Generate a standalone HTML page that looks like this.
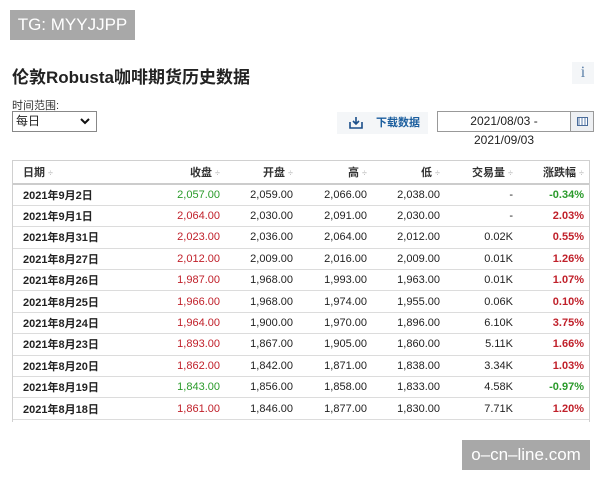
<!DOCTYPE html>
<html><head><meta charset="utf-8"><style>
*{margin:0;padding:0;box-sizing:border-box}
body{width:600px;height:480px;background:#fff;font-family:"Liberation Sans","Noto Sans CJK SC",sans-serif;position:relative;overflow:hidden;color:#222}
.a{position:absolute}
.wm{background:#a8a8a8;color:#fff;font-size:17px;line-height:30px;text-align:center}
table{border-collapse:collapse;font-size:11px;width:577px}
td,th{height:21.4px;padding:0;text-align:right;border-bottom:1px solid #dcdcdc;white-space:nowrap}
th{font-weight:bold;color:#333;height:23px;border-bottom:2px solid #ccc}
th span{color:#aaa;font-weight:normal;font-size:9px;margin-left:3px}
td:first-child,th:first-child{text-align:left;padding-left:10px;font-weight:bold}
td:last-child,th:last-child{padding-right:6px;font-weight:bold}
.g{color:#2a9a2a}.r{color:#c0202a}
</style></head><body>
<div class="a wm" style="left:10px;top:10px;width:125px;height:30px">TG: MYYJJPP</div>
<div class="a" style="left:12px;top:63px;font-size:17px;font-weight:bold;color:#222">伦敦Robusta咖啡期货历史数据</div>
<div class="a" style="left:572px;top:62px;width:22px;height:22px;background:#f4f6f8;color:#5a7fa8;font-family:'Liberation Serif',serif;font-size:16px;text-align:center;line-height:22px">i</div>
<div class="a" style="left:12px;top:97px;font-size:11px;color:#333">时间范围:</div>
<div class="a" style="left:12px;top:111px;width:85px;height:21px;border:1px solid #888;font-size:12px;line-height:19px;padding-left:3px">每日<svg style="position:absolute;right:6px;top:6px" width="10" height="7" viewBox="0 0 10 7"><path d="M1 1l4 4 4-4" fill="none" stroke="#111" stroke-width="2"/></svg></div>
<div class="a" style="left:337px;top:112px;width:91px;height:22px;background:#f4f6f8;font-size:11px;line-height:22px;color:#1b5e9e;font-weight:bold">
<svg style="position:absolute;left:12px;top:4px" width="14" height="13" viewBox="0 0 14 13"><path d="M1 6v6h12V6M7 1v7M4 5l3 3 3-3" fill="none" stroke="#1b4f8a" stroke-width="1.6"/></svg>
<span style="position:absolute;left:39px">下载数据</span></div>
<div class="a" style="left:437px;top:111px;width:134px;height:21px;border:1px solid #999;font-size:12px;text-align:center;line-height:19px">2021/08/03 -</div>
<div class="a" style="left:570px;top:111px;width:24px;height:21px;border:1px solid #999;background:#eef0f3"><div style="margin:5px 6px;width:11px;height:9px;border:1px solid #4a6c9a;background:repeating-linear-gradient(90deg,#aebfd6 0 2px,#fff 2px 3px)"></div></div>
<div class="a" style="left:437px;top:133px;width:134px;font-size:12px;text-align:center">2021/09/03</div>
<div class="a" style="left:12px;top:160px;width:578px;height:262px;border:1px solid #d0d0d0;border-bottom:none;overflow:hidden">
<table>
<tr><th>日期<span>÷</span></th><th style="width:75px">收盘<span>÷</span></th><th style="width:73px">开盘<span>÷</span></th><th style="width:74px">高<span>÷</span></th><th style="width:73px">低<span>÷</span></th><th style="width:73px">交易量<span>÷</span></th><th style="width:77px">涨跌幅<span>÷</span></th></tr>
<tr><td>2021年9月2日</td><td class="g">2,057.00</td><td>2,059.00</td><td>2,066.00</td><td>2,038.00</td><td>-</td><td class="g">-0.34%</td></tr>
<tr><td>2021年9月1日</td><td class="r">2,064.00</td><td>2,030.00</td><td>2,091.00</td><td>2,030.00</td><td>-</td><td class="r">2.03%</td></tr>
<tr><td>2021年8月31日</td><td class="r">2,023.00</td><td>2,036.00</td><td>2,064.00</td><td>2,012.00</td><td>0.02K</td><td class="r">0.55%</td></tr>
<tr><td>2021年8月27日</td><td class="r">2,012.00</td><td>2,009.00</td><td>2,016.00</td><td>2,009.00</td><td>0.01K</td><td class="r">1.26%</td></tr>
<tr><td>2021年8月26日</td><td class="r">1,987.00</td><td>1,968.00</td><td>1,993.00</td><td>1,963.00</td><td>0.01K</td><td class="r">1.07%</td></tr>
<tr><td>2021年8月25日</td><td class="r">1,966.00</td><td>1,968.00</td><td>1,974.00</td><td>1,955.00</td><td>0.06K</td><td class="r">0.10%</td></tr>
<tr><td>2021年8月24日</td><td class="r">1,964.00</td><td>1,900.00</td><td>1,970.00</td><td>1,896.00</td><td>6.10K</td><td class="r">3.75%</td></tr>
<tr><td>2021年8月23日</td><td class="r">1,893.00</td><td>1,867.00</td><td>1,905.00</td><td>1,860.00</td><td>5.11K</td><td class="r">1.66%</td></tr>
<tr><td>2021年8月20日</td><td class="r">1,862.00</td><td>1,842.00</td><td>1,871.00</td><td>1,838.00</td><td>3.34K</td><td class="r">1.03%</td></tr>
<tr><td>2021年8月19日</td><td class="g">1,843.00</td><td>1,856.00</td><td>1,858.00</td><td>1,833.00</td><td>4.58K</td><td class="g">-0.97%</td></tr>
<tr><td>2021年8月18日</td><td class="r">1,861.00</td><td>1,846.00</td><td>1,877.00</td><td>1,830.00</td><td>7.71K</td><td class="r">1.20%</td></tr>
<tr><td>&nbsp;</td><td></td><td></td><td></td><td></td><td></td><td></td></tr>
</table></div>
<div class="a wm" style="left:462px;top:440px;width:128px;height:30px">o–cn–line.com</div>
</body></html>
